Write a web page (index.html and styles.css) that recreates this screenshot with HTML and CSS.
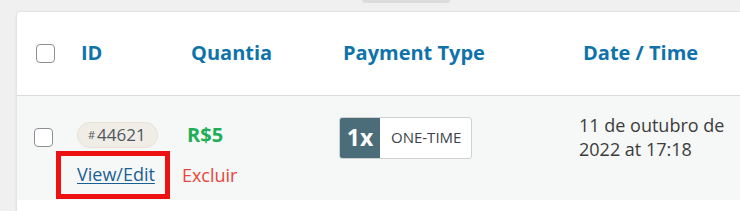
FILE: index.html
```html
<!DOCTYPE html>
<html lang="pt-BR">
<head>
    <meta charset="UTF-8">
    <title>Pagamentos</title>
    <link rel="stylesheet" href="styles.css">
</head>
<body>
    <div class="tab-edge"></div>
    <div class="card">
        <div class="grid head">
            <div class="cell check"><span class="box"></span></div>
            <div class="cell th">ID</div>
            <div class="cell th">Quantia</div>
            <div class="cell th">Payment Type</div>
            <div class="cell th">Date / Time</div>
        </div>
        <div class="grid row">
            <div class="cell check row-check"><span class="box"></span></div>
            <div class="cell id-cell">
                <span class="pill"><span class="hash">#</span>44621</span>
                <div class="actions">
                    <span class="highlight"><a href="#" class="edit">View/Edit</a></span>
                    <a href="#" class="delete">Excluir</a>
                </div>
            </div>
            <div class="cell amount">R$5</div>
            <div class="cell">
                <span class="ptype"><span class="times">1x</span><span class="label">ONE-TIME</span></span>
            </div>
            <div class="cell date">11 de outubro de<br>2022 at 17:18</div>
        </div>
    </div>
</body>
</html>
```
FILE: styles.css
```css
body {
    margin: 0;
    background: #f0f0f1;
    font-family: 'Open Sans', sans-serif;
    color: #3c434a;
    overflow: hidden;
}
.tab-edge {
    margin-left: 362px;
    width: 88px;
    height: 3px;
    background: #dcdcde;
    border-radius: 0 0 3px 3px;
}
.card {
    margin: 8px 0 0 16px;
    width: 800px;
    padding-bottom: 40px;
    background: #fff;
    border: 1px solid #e2e4e7;
    border-radius: 4px 0 0 0;
    box-shadow: 0 1px 3px rgba(0, 0, 0, 0.06);
}
.grid {
    display: grid;
    grid-template-columns: 41px 110px 152px 240px 1fr;
    padding-left: 19px;
}
.head {
    height: 83px;
    align-items: center;
    border-bottom: 1px solid #dcdcde;
}
.th {
    padding-left: 4px;
    font-size: 20px;
    font-weight: 700;
    color: #0f73ab;
    line-height: 24px;
    margin-top: -2px;
}
.box {
    display: block;
    width: 17px;
    height: 17px;
    border: 1px solid #8c8f94;
    border-radius: 4px;
    background: #fff;
}
.row {
    background: #f6f7f7;
    height: 104px;
    align-items: start;
}
.row-check {
    margin: 32px 0 0 -2px;
}
.id-cell {
    padding-top: 26px;
}
.pill {
    display: inline-block;
    height: 24px;
    line-height: 24px;
    padding: 0 11px 0 10px;
    background: #f0ede6;
    border: 1px solid #e6e2d8;
    border-radius: 13px;
    font-size: 17px;
    color: #50575e;
}
.hash {
    font-size: 11px;
    margin-right: 2px;
    vertical-align: 2px;
}
.actions {
    display: flex;
    align-items: center;
    margin-top: 3px;
    white-space: nowrap;
    margin-left: -21px;
    font-size: 18px;
    line-height: 24px;
}
.highlight {
    border: 5px solid #ee1111;
    padding: 6px 10px 8px 16px;
}
.edit {
    color: #1b5f95;
    text-decoration: underline;
    text-underline-offset: 2px;
}
.delete {
    margin-left: 12px;
    color: #e8463a;
    text-decoration: none;
}
.amount {
    margin-top: 27px;
    font-size: 20px;
    font-weight: 700;
    line-height: 24px;
    color: #1fae58;
}
.ptype {
    display: inline-flex;
    margin-top: 21px;
    height: 40px;
    border: 1px solid #d0d0d0;
    border-radius: 3px;
    overflow: hidden;
    background: #fff;
}
.times {
    width: 40px;
    background: #4b6d79;
    color: #fff;
    font-weight: 700;
    font-size: 23px;
    line-height: 38px;
    text-align: center;
}
.label {
    padding: 0 10px 0 11px;
    font-size: 15px;
    line-height: 38px;
    color: #3c434a;
}
.date {
    margin-top: 17px;
    font-size: 18px;
    line-height: 24px;
    color: #3c3c3c;
}
```
